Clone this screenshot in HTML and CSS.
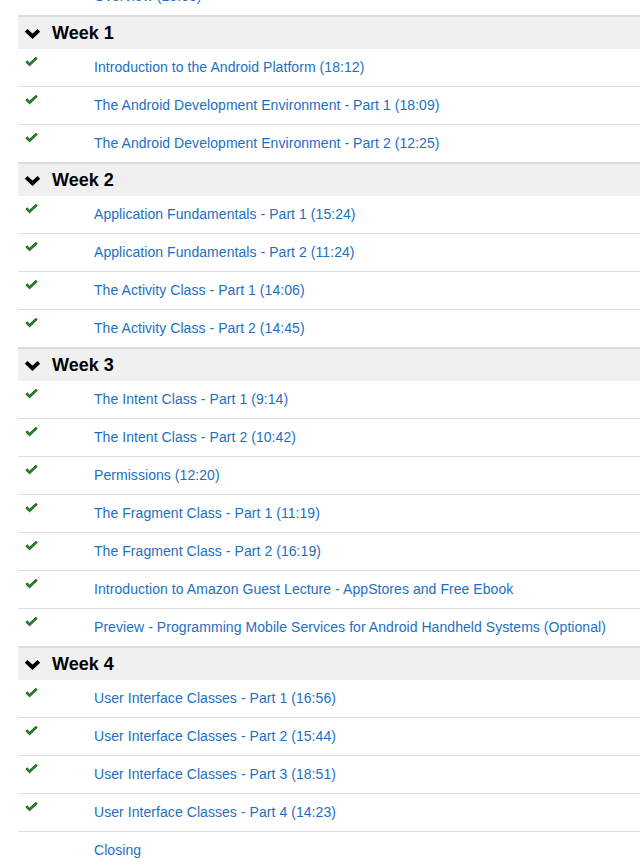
FILE: index.html
```html
<!DOCTYPE html>
<html>
<head>
<meta charset="utf-8">
<link rel="stylesheet" href="styles.css">
</head>
<body>
<div class="course">
  <ul class="items">
    <li class="item"><span class="icon"></span><a class="link" href="#">Overview (10:03)</a></li>
  </ul>

  <section class="week">
    <h2 class="week-head"><svg class="chev" viewBox="0 0 16 10"><polyline points="2,2 8,7.6 14,2"/></svg>Week 1</h2>
    <ul class="items">
      <li class="item"><span class="icon"><svg class="check" viewBox="0 0 13 10"><path d="M0.8 5.2 L4.6 8.9 L12.3 1.6 L10.8 0.3 L4.6 6.1 L2.2 3.8 Z"/></svg></span><a class="link" href="#">Introduction to the Android Platform (18:12)</a></li>
      <li class="item"><span class="icon"><svg class="check" viewBox="0 0 13 10"><path d="M0.8 5.2 L4.6 8.9 L12.3 1.6 L10.8 0.3 L4.6 6.1 L2.2 3.8 Z"/></svg></span><a class="link" href="#">The Android Development Environment - Part 1 (18:09)</a></li>
      <li class="item"><span class="icon"><svg class="check" viewBox="0 0 13 10"><path d="M0.8 5.2 L4.6 8.9 L12.3 1.6 L10.8 0.3 L4.6 6.1 L2.2 3.8 Z"/></svg></span><a class="link" href="#">The Android Development Environment - Part 2 (12:25)</a></li>
    </ul>
  </section>

  <section class="week">
    <h2 class="week-head"><svg class="chev" viewBox="0 0 16 10"><polyline points="2,2 8,7.6 14,2"/></svg>Week 2</h2>
    <ul class="items">
      <li class="item"><span class="icon"><svg class="check" viewBox="0 0 13 10"><path d="M0.8 5.2 L4.6 8.9 L12.3 1.6 L10.8 0.3 L4.6 6.1 L2.2 3.8 Z"/></svg></span><a class="link" href="#">Application Fundamentals - Part 1 (15:24)</a></li>
      <li class="item"><span class="icon"><svg class="check" viewBox="0 0 13 10"><path d="M0.8 5.2 L4.6 8.9 L12.3 1.6 L10.8 0.3 L4.6 6.1 L2.2 3.8 Z"/></svg></span><a class="link" href="#">Application Fundamentals - Part 2 (11:24)</a></li>
      <li class="item"><span class="icon"><svg class="check" viewBox="0 0 13 10"><path d="M0.8 5.2 L4.6 8.9 L12.3 1.6 L10.8 0.3 L4.6 6.1 L2.2 3.8 Z"/></svg></span><a class="link" href="#">The Activity Class - Part 1 (14:06)</a></li>
      <li class="item"><span class="icon"><svg class="check" viewBox="0 0 13 10"><path d="M0.8 5.2 L4.6 8.9 L12.3 1.6 L10.8 0.3 L4.6 6.1 L2.2 3.8 Z"/></svg></span><a class="link" href="#">The Activity Class - Part 2 (14:45)</a></li>
    </ul>
  </section>

  <section class="week">
    <h2 class="week-head"><svg class="chev" viewBox="0 0 16 10"><polyline points="2,2 8,7.6 14,2"/></svg>Week 3</h2>
    <ul class="items">
      <li class="item"><span class="icon"><svg class="check" viewBox="0 0 13 10"><path d="M0.8 5.2 L4.6 8.9 L12.3 1.6 L10.8 0.3 L4.6 6.1 L2.2 3.8 Z"/></svg></span><a class="link" href="#">The Intent Class - Part 1 (9:14)</a></li>
      <li class="item"><span class="icon"><svg class="check" viewBox="0 0 13 10"><path d="M0.8 5.2 L4.6 8.9 L12.3 1.6 L10.8 0.3 L4.6 6.1 L2.2 3.8 Z"/></svg></span><a class="link" href="#">The Intent Class - Part 2 (10:42)</a></li>
      <li class="item"><span class="icon"><svg class="check" viewBox="0 0 13 10"><path d="M0.8 5.2 L4.6 8.9 L12.3 1.6 L10.8 0.3 L4.6 6.1 L2.2 3.8 Z"/></svg></span><a class="link" href="#">Permissions (12:20)</a></li>
      <li class="item"><span class="icon"><svg class="check" viewBox="0 0 13 10"><path d="M0.8 5.2 L4.6 8.9 L12.3 1.6 L10.8 0.3 L4.6 6.1 L2.2 3.8 Z"/></svg></span><a class="link" href="#">The Fragment Class - Part 1 (11:19)</a></li>
      <li class="item"><span class="icon"><svg class="check" viewBox="0 0 13 10"><path d="M0.8 5.2 L4.6 8.9 L12.3 1.6 L10.8 0.3 L4.6 6.1 L2.2 3.8 Z"/></svg></span><a class="link" href="#">The Fragment Class - Part 2 (16:19)</a></li>
      <li class="item"><span class="icon"><svg class="check" viewBox="0 0 13 10"><path d="M0.8 5.2 L4.6 8.9 L12.3 1.6 L10.8 0.3 L4.6 6.1 L2.2 3.8 Z"/></svg></span><a class="link" href="#">Introduction to Amazon Guest Lecture - AppStores and Free Ebook</a></li>
      <li class="item"><span class="icon"><svg class="check" viewBox="0 0 13 10"><path d="M0.8 5.2 L4.6 8.9 L12.3 1.6 L10.8 0.3 L4.6 6.1 L2.2 3.8 Z"/></svg></span><a class="link" href="#">Preview - Programming Mobile Services for Android Handheld Systems (Optional)</a></li>
    </ul>
  </section>

  <section class="week">
    <h2 class="week-head"><svg class="chev" viewBox="0 0 16 10"><polyline points="2,2 8,7.6 14,2"/></svg>Week 4</h2>
    <ul class="items">
      <li class="item"><span class="icon"><svg class="check" viewBox="0 0 13 10"><path d="M0.8 5.2 L4.6 8.9 L12.3 1.6 L10.8 0.3 L4.6 6.1 L2.2 3.8 Z"/></svg></span><a class="link" href="#">User Interface Classes - Part 1 (16:56)</a></li>
      <li class="item"><span class="icon"><svg class="check" viewBox="0 0 13 10"><path d="M0.8 5.2 L4.6 8.9 L12.3 1.6 L10.8 0.3 L4.6 6.1 L2.2 3.8 Z"/></svg></span><a class="link" href="#">User Interface Classes - Part 2 (15:44)</a></li>
      <li class="item"><span class="icon"><svg class="check" viewBox="0 0 13 10"><path d="M0.8 5.2 L4.6 8.9 L12.3 1.6 L10.8 0.3 L4.6 6.1 L2.2 3.8 Z"/></svg></span><a class="link" href="#">User Interface Classes - Part 3 (18:51)</a></li>
      <li class="item"><span class="icon"><svg class="check" viewBox="0 0 13 10"><path d="M0.8 5.2 L4.6 8.9 L12.3 1.6 L10.8 0.3 L4.6 6.1 L2.2 3.8 Z"/></svg></span><a class="link" href="#">User Interface Classes - Part 4 (14:23)</a></li>
      <li class="item"><span class="icon"></span><a class="link" href="#">Closing</a></li>
    </ul>
  </section>
</div>
</body>
</html>
```
FILE: styles.css
```css
html, body {
  margin: 0;
  padding: 0;
  background: #fff;
  overflow: hidden;
}
body {
  font-family: "Liberation Sans", Arial, sans-serif;
  padding-left: 18px;
}
.course {
  margin-top: -22px;
}
.items {
  list-style: none;
  margin: 0;
  padding: 0;
}
.item {
  display: flex;
  align-items: center;
  height: 37px;
  padding-bottom: 2px;
  box-sizing: border-box;
  height: 38px;
  border-bottom: 1px solid #e0e0e0;
}
.item:last-child {
  border-bottom: none;
  height: 37px;
}
.icon {
  width: 76px;
  flex: none;
  align-self: flex-start;
  padding: 8px 0 0 7px;
  box-sizing: border-box;
}
.check {
  width: 13px;
  height: 10px;
  display: block;
}
.check path {
  fill: #1e8c1e;
  stroke: #0b3f0b;
  stroke-width: 0.7;
  stroke-linejoin: round;
}
.link {
  font-size: 14px;
  letter-spacing: 0.06px;
  color: #1c6fc3;
  text-decoration: none;
  white-space: nowrap;
}
.week-head {
  display: flex;
  align-items: center;
  margin: 0;
  height: 32px;
  box-sizing: content-box;
  background: #f0f0f0;
  border-top: 2px solid #dcdcdc;
  font-size: 18px;
  font-weight: bold;
  color: #000;
}
.chev {
  width: 17px;
  height: 11px;
  margin: 1px 11px 0 6px;
}
.chev polyline {
  fill: none;
  stroke: #000;
  stroke-width: 3.6;
  stroke-linecap: butt;
  stroke-linejoin: miter;
}
```
